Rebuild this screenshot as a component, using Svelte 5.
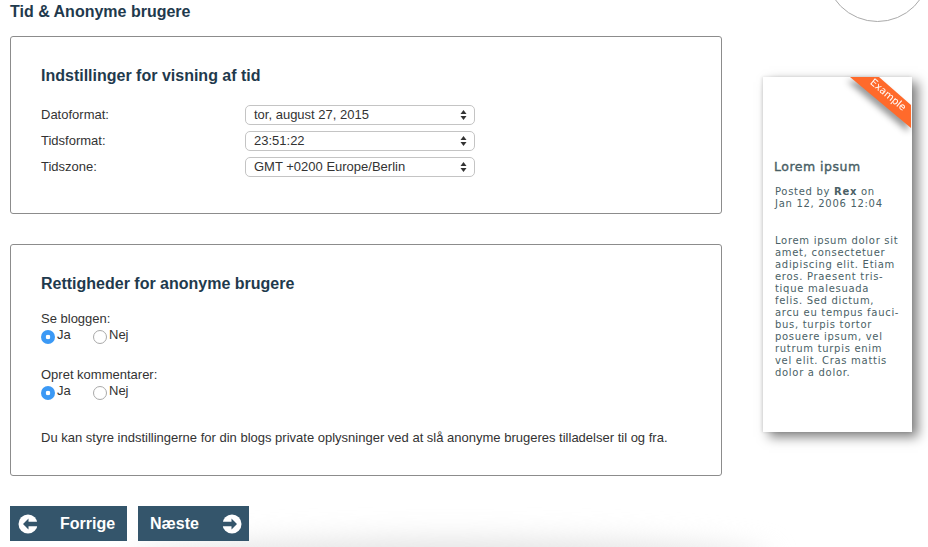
<script lang="ts">
  const selects = [
    { label: "Datoformat:", value: "tor, august 27, 2015" },
    { label: "Tidsformat:", value: "23:51:22" },
    { label: "Tidszone:", value: "GMT +0200 Europe/Berlin" },
  ];

  const perms = [
    { name: "view", label: "Se bloggen:" },
    { name: "comment", label: "Opret kommentarer:" },
  ];

  const lorem = [
    "Lorem ipsum dolor sit",
    "amet, consectetuer",
    "adipiscing elit. Etiam",
    "eros. Praesent tris-",
    "tique malesuada",
    "felis. Sed dictum,",
    "arcu eu tempus fauci-",
    "bus, turpis tortor",
    "posuere ipsum, vel",
    "rutrum turpis enim",
    "vel elit. Cras mattis",
    "dolor a dolor.",
  ];
</script>

<div class="page">
  <div class="floor"></div>
  <div class="circle"></div>

  <main class="main">
    <h1 class="page-title">Tid &amp; Anonyme brugere</h1>

    <section class="panel panel-time">
      <h2>Indstillinger for visning af tid</h2>
      {#each selects as row (row.label)}
        <div class="row">
          <span class="row-label">{row.label}</span>
          <span class="select">
            <span>{row.value}</span>
            <svg viewBox="0 0 7 12" width="7" height="12">
              <path d="M3.5 1 L6.5 5 H0.5 Z M3.5 11 L6.5 7 H0.5 Z" fill="#333" />
            </svg>
          </span>
        </div>
      {/each}
    </section>

    <section class="panel panel-anon">
      <h2>Rettigheder for anonyme brugere</h2>
      {#each perms as perm (perm.name)}
        <div class="perm">
          <div class="perm-label">{perm.label}</div>
          <div class="radios">
            <label class="radio-yes"><input type="radio" name={perm.name} checked />Ja</label>
            <label><input type="radio" name={perm.name} />Nej</label>
          </div>
        </div>
      {/each}
      <p class="note">Du kan styre indstillingerne for din blogs private oplysninger ved at slå anonyme brugeres tilladelser til og fra.</p>
    </section>

    <nav class="pager">
      <button class="btn btn-prev">
        <svg viewBox="0 0 20 20" width="20" height="20">
          <circle cx="10" cy="10" r="9.5" fill="#fff" />
          <path d="M10.500 4.500 L5 10 L10.500 15.500 V12.300 H20 V7.700 H10.500 Z" fill="#34556b" />
        </svg>
        Forrige
      </button>
      <button class="btn btn-next">
        Næste
        <svg viewBox="0 0 20 20" width="20" height="20">
          <circle cx="10" cy="10" r="9.5" fill="#fff" />
          <path d="M9.500 4.500 L15 10 L9.500 15.500 V12.300 H0 V7.700 H9.500 Z" fill="#34556b" />
        </svg>
      </button>
    </nav>
  </main>

  <aside class="card">
    <div class="ribbon">
      <svg viewBox="0 0 62 52" width="62" height="52">
        <path d="M0 0 H29 L61 28 V51 Z" fill="#ff6a2b" />
      </svg>
      <span>Example</span>
    </div>
    <h3>Lorem ipsum</h3>
    <p class="meta">Posted by <b>Rex</b> on<br />Jan 12, 2006 12:04</p>
    <p class="body">
      {#each lorem as line}
        {line}<br />
      {/each}
    </p>
  </aside>
</div>

<style>
  :global(body) {
    background: #fff;
  }

  .page {
    position: relative;
    width: 928px;
    height: 547px;
    overflow: hidden;
    display: flex;
    font-family: "Liberation Sans", Arial, sans-serif;
    font-size: 13px;
    color: #333;
  }

  .floor {
    position: absolute;
    left: 130px;
    top: 540px;
    width: 640px;
    height: 40px;
    border-radius: 50%;
    background: #e2e2e2;
    filter: blur(14px);
  }

  .circle {
    position: absolute;
    left: 825px;
    top: -83px;
    width: 105px;
    height: 105px;
    box-sizing: border-box;
    border: 1px solid #aaa;
    border-radius: 50%;
  }

  .main {
    position: relative;
    width: 712px;
    margin-left: 10px;
  }

  .page-title {
    margin: 0;
    height: 36px;
    padding-top: 2px;
    box-sizing: border-box;
    font-size: 16px;
    line-height: 19px;
    font-weight: 700;
    color: #1f3a4d;
  }

  .panel {
    box-sizing: border-box;
    border: 1px solid #8c8c8c;
    border-radius: 3px;
    padding: 0 30px;
    background: #fff;
  }

  .panel h2 {
    margin: 0;
    font-size: 16px;
    line-height: 19px;
    font-weight: 700;
    color: #1f3a4d;
  }

  .panel-time {
    height: 178px;
    padding-top: 29px;
  }

  .panel-time h2 {
    margin-bottom: 20px;
  }

  .row {
    display: flex;
    align-items: center;
    height: 20px;
    margin-bottom: 6px;
    line-height: 18px;
  }

  .row-label {
    width: 204px;
  }

  .select {
    box-sizing: border-box;
    width: 230px;
    height: 20px;
    padding: 0 7px 0 8px;
    display: flex;
    align-items: center;
    justify-content: space-between;
    background: #fff;
    border: 1px solid #c4c4c4;
    border-radius: 5px;
  }

  .panel-anon {
    margin-top: 30px;
    height: 232px;
    padding-top: 29px;
  }

  .panel-anon h2 {
    margin-bottom: 18px;
  }

  .perm {
    height: 56px;
  }

  .perm-label {
    line-height: 16px;
  }

  .radios {
    display: flex;
    line-height: 16px;
  }

  .radios label {
    display: flex;
    align-items: flex-start;
  }

  .radio-yes {
    width: 52px;
  }

  input[type="radio"] {
    appearance: none;
    box-sizing: border-box;
    width: 14px;
    height: 14px;
    margin: 3px 2px 0 0;
    border: 1px solid #a9a9a9;
    border-radius: 50%;
    background: #fff;
  }

  input[type="radio"]:checked {
    border: none;
    background: radial-gradient(circle, #fff 0 2px, #3b99f5 2.6px);
  }

  .note {
    margin: 7px 0 0;
    line-height: 16px;
  }

  .pager {
    display: flex;
    gap: 11px;
    margin-top: 30px;
  }

  .btn {
    height: 35px;
    padding: 0;
    display: flex;
    align-items: center;
    border: none;
    background: #34556b;
    color: #fff;
    font-family: inherit;
    font-size: 16px;
    font-weight: 700;
  }

  .btn-prev {
    width: 117px;
    padding-left: 8px;
    gap: 22px;
  }

  .btn-next {
    width: 111px;
    padding-left: 12px;
    gap: 23px;
  }

  .card {
    position: absolute;
    left: 763px;
    top: 77px;
    box-sizing: border-box;
    width: 149px;
    height: 355px;
    padding: 82px 0 0 11px;
    background: #fff;
    box-shadow:
      6px 5px 11px rgba(0, 0, 0, 0.5),
      -1px 0 3px rgba(0, 0, 0, 0.12);
    font-family: "DejaVu Sans", Verdana, sans-serif;
    font-size: 10px;
    letter-spacing: 0.7px;
    line-height: 12px;
    color: #4a5f66;
  }

  .ribbon {
    position: absolute;
    right: 0;
    top: 0;
    width: 62px;
    height: 52px;
    letter-spacing: 0;
    filter: drop-shadow(-3px 4px 3px rgba(0, 0, 0, 0.4));
  }

  .ribbon svg {
    display: block;
  }

  .ribbon span {
    position: absolute;
    left: 10px;
    top: 12px;
    width: 56px;
    text-align: center;
    transform: rotate(40deg);
    color: #fff;
    font-size: 10px;
    line-height: 12px;
  }

  .card h3 {
    margin: 0;
    font-size: 12.5px;
    letter-spacing: 0.5px;
    line-height: 16px;
    font-weight: 400;
    -webkit-text-stroke: 0.4px #4a5f66;
    color: #4a5f66;
  }

  .meta {
    margin: 11px 0 0 1px;
  }

  .body {
    margin: 25px 0 0 1px;
  }
</style>
